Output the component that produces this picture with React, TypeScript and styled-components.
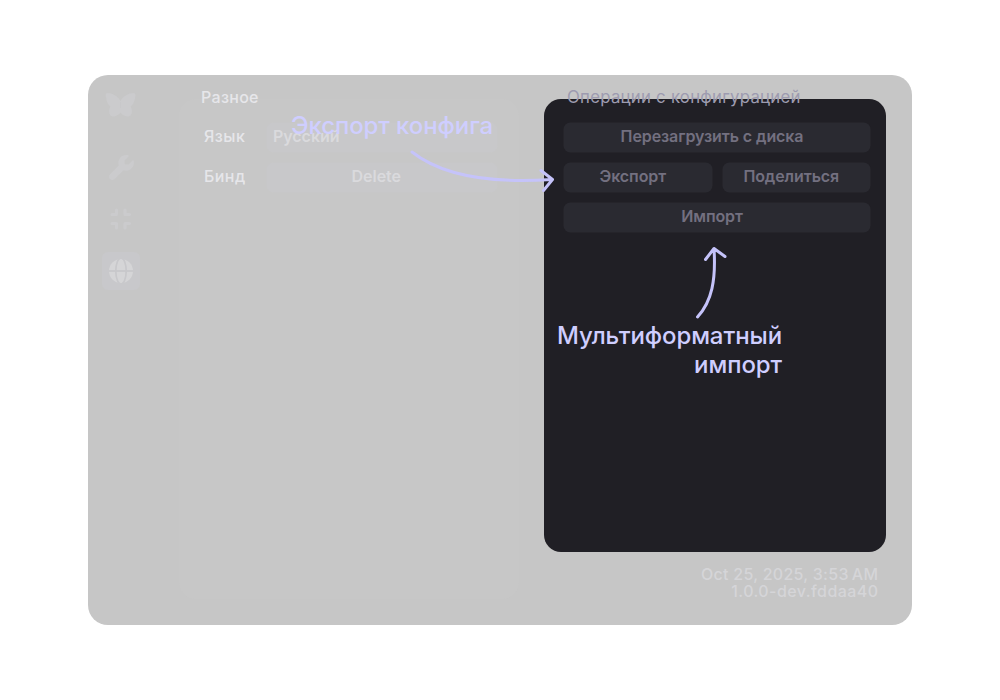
import React from "react";
import styled, { createGlobalStyle } from "styled-components";

const Global = createGlobalStyle`
  body { margin: 0; background: #fff; }
  * { box-sizing: border-box; }
`;

const Page = styled.div`
  width: 1000px;
  height: 700px;
  padding: 75px 88px;
  font-family: Inter, sans-serif;
`;

const Window = styled.div`
  position: relative;
  display: flex;
  width: 824px;
  height: 550px;
  border-radius: 20px;
  background: #c6c6c6;
`;

const Sidebar = styled.nav`
  display: flex;
  flex-direction: column;
  align-items: center;
  width: 66px;
  padding-top: 10px;
  border-radius: 20px 0 0 20px;
`;

const NavItem = styled.div<{ $active?: boolean; $gap?: number }>`
  display: flex;
  align-items: center;
  justify-content: center;
  width: 38px;
  height: 38px;
  margin-top: ${(p) => p.$gap ?? 14}px;
  border-radius: 6px;
  color: ${(p) => (p.$active ? "#d5d5d7" : "#cbcbcd")};
  background: ${(p) => (p.$active ? "#c8c8cb" : "transparent")};
`;

const Column = styled.section<{ $width: number; $left: number }>`
  width: ${(p) => p.$width}px;
  margin-left: ${(p) => p.$left}px;
`;

const Title = styled.h2<{ $muted?: boolean }>`
  position: relative;
  z-index: 1;
  height: 24px;
  margin: 0;
  padding: 12px 0 0 ${(p) => (p.$muted ? 23 : 22)}px;
  font-size: ${(p) => (p.$muted ? 16.8 : 16)}px;
  line-height: ${(p) => (p.$muted ? 21 : 20)}px;
  font-weight: ${(p) => (p.$muted ? 400 : 500)};
  letter-spacing: ${(p) => (p.$muted ? 0.24 : 0.3)}px;
  color: ${(p) => (p.$muted ? "#9d9bb0" : "#e6e6ea")};
  white-space: nowrap;
`;

const Panel = styled.div<{ $dark?: boolean }>`
  display: flex;
  flex-direction: column;
  gap: 10px;
  height: ${(p) => (p.$dark ? 453 : 500)}px;
  padding: ${(p) => (p.$dark ? "24px 15px 0 20px" : "24px 21px 0 25.5px")};
  border-radius: 17px;
  background: ${(p) => (p.$dark ? "#201f25" : "#c7c7c7")};
`;

const Row = styled.div`
  display: flex;
  gap: 10px;
  height: 30px;
  transform: translate(-0.5px, -0.5px);
`;

const Label = styled.span`
  width: 52px;
  font-size: 16px;
  line-height: 27px;
  font-weight: 500;
  letter-spacing: 0.45px;
  color: #e6e6ea;
`;

const Field = styled.div<{ $start?: boolean }>`
  flex: 1;
  padding-left: ${(p) => (p.$start ? 7 : 0)}px;
  padding-right: ${(p) => (p.$start ? 0 : 11)}px;
  border-radius: 7px;
  background: #c8c8ca;
  font-size: 16px;
  line-height: 27px;
  font-weight: 600;
  letter-spacing: -0.05px;
  text-align: ${(p) => (p.$start ? "left" : "center")};
  color: #dadadd;
`;

const Button = styled.button`
  flex: 1;
  height: 30px;
  padding: 0 10px 3px 0;
  border: 0;
  border-radius: 7px;
  background: #2a2a31;
  font: 600 16px/27px Inter, sans-serif;
  letter-spacing: -0.1px;
  color: #737080;
`;

const Build = styled.footer`
  position: absolute;
  right: 34px;
  bottom: 25px;
  font-size: 16px;
  line-height: 17px;
  font-weight: 500;
  text-align: right;
  color: #d5d5d8;
`;

const BuildLine = styled.div<{ $spacing: number }>`
  letter-spacing: ${(p) => p.$spacing}px;
  margin-right: -${(p) => p.$spacing}px;
`;

const Note = styled.div<{ $x: number; $y: number; $width: number }>`
  position: absolute;
  z-index: 2;
  left: ${(p) => p.$x}px;
  top: ${(p) => p.$y}px;
  width: ${(p) => p.$width}px;
  font-size: 24px;
  line-height: 29px;
  font-weight: 500;
  letter-spacing: -0.09px;
  text-align: right;
  white-space: nowrap;
  color: #cfceff;
`;

const Arrows = styled.svg`
  position: absolute;
  z-index: 2;
  inset: 0;
  fill: none;
  stroke: #c5c3fa;
  stroke-width: 3;
  stroke-linecap: round;
  stroke-linejoin: round;
`;

const Butterfly = () => (
  <svg width="32" height="26" viewBox="0 0 32 26" fill="currentColor">
    <path d="M15.500 9C13 4 7 1 2.500 1C0.500 1 0.500 3 1 5C1.800 10 2.700 13 5.500 14.500C3.500 17.500 3.500 21 5.500 23.500C8 25.500 13 24 15.500 20.500C18 24 23 25.500 25.500 23.500C27.500 21 27.500 17.500 25.500 14.500C28.300 13 29.200 10 30.300 5C30.800 3 30.500 1 28.500 1C24 1 18 4 15.500 9Z" />
    <path d="M15.500 10V16" stroke="#c6c6c6" strokeWidth="1" opacity=".4" />
  </svg>
);

const Wrench = () => (
  <svg width="25" height="25" viewBox="0 0 512 512" fill="currentColor">
    <path d="M352 320c88.400 0 160-71.600 160-160c0-15.300-2.200-30.100-6.200-44.200c-3.100-10.800-16.400-13.200-24.300-5.300l-76.800 76.800c-3 3-7.100 4.700-11.300 4.700L336 192c-8.800 0-16-7.200-16-16l0-57.400c0-4.200 1.700-8.300 4.700-11.300l76.800-76.800c7.900-7.900 5.400-21.200-5.300-24.300C382.100 2.200 367.300 0 352 0C263.600 0 192 71.600 192 160c0 19.100 3.400 37.500 9.500 54.500L19.900 396.100C7.200 408.800 0 426.100 0 444.100C0 481.600 30.400 512 67.900 512c18 0 35.300-7.200 48-19.900L297.500 310.500c17 6.200 35.400 9.500 54.500 9.500z" />
  </svg>
);

const Compress = () => (
  <svg width="22" height="22" viewBox="0 0 22 22" fill="none" stroke="currentColor" strokeWidth="3" strokeLinecap="round" strokeLinejoin="round">
    <path d="M6.500 2V6.500H2M15 2V6.500H19.500M6.500 20V15.500H2M15 20V15.500H19.500" />
  </svg>
);

const Globe = () => (
  <svg width="24" height="24" viewBox="0 0 24 24">
    <circle cx="12" cy="12" r="12" fill="currentColor" />
    <ellipse cx="12" cy="12" rx="5.200" ry="13" fill="none" stroke="#c8c8cb" strokeWidth="1.700" />
    <path d="M0 12H24" stroke="#c8c8cb" strokeWidth="1.800" />
  </svg>
);

export default function App() {
  return (
    <Page>
      <Global />
      <Window>
        <Sidebar>
          <NavItem $gap={1}><Butterfly /></NavItem>
          <NavItem $gap={24}><Wrench /></NavItem>
          <NavItem><Compress /></NavItem>
          <NavItem $active><Globe /></NavItem>
        </Sidebar>
        <Column $width={340} $left={25}>
          <Title>Разное</Title>
          <Panel>
            <Row>
              <Label>Язык</Label>
              <Field $start>Русский</Field>
            </Row>
            <Row>
              <Label>Бинд</Label>
              <Field>Delete</Field>
            </Row>
          </Panel>
        </Column>
        <Column $width={342} $left={25}>
          <Title $muted>Операции с конфигурацией</Title>
          <Panel $dark>
            <Row><Button>Перезагрузить с диска</Button></Row>
            <Row>
              <Button>Экспорт</Button>
              <Button>Поделиться</Button>
            </Row>
            <Row><Button>Импорт</Button></Row>
          </Panel>
        </Column>
        <Build>
          <BuildLine $spacing={0.27}>Oct 25, 2025, 3:53{"\u202f"}AM</BuildLine>
          <BuildLine $spacing={0.43}>1.0.0-dev.fddaa40</BuildLine>
        </Build>
        <Note $x={203} $y={36} $width={202}>Экспорт конфига</Note>
        <Note $x={464} $y={246} $width={230}>
          Мультиформатный
          <br />
          импорт
        </Note>
        <Arrows width="824" height="550" viewBox="88 75 824 550">
          <path d="M412 152C440 174 485 184 552 179.500M541 170.500L552.500 179.500L543.500 190.500" />
          <path d="M697.500 317C712 301 716 280 714 248.500M705.500 259.500L714 248.500L725 256.500" />
        </Arrows>
      </Window>
    </Page>
  );
}
